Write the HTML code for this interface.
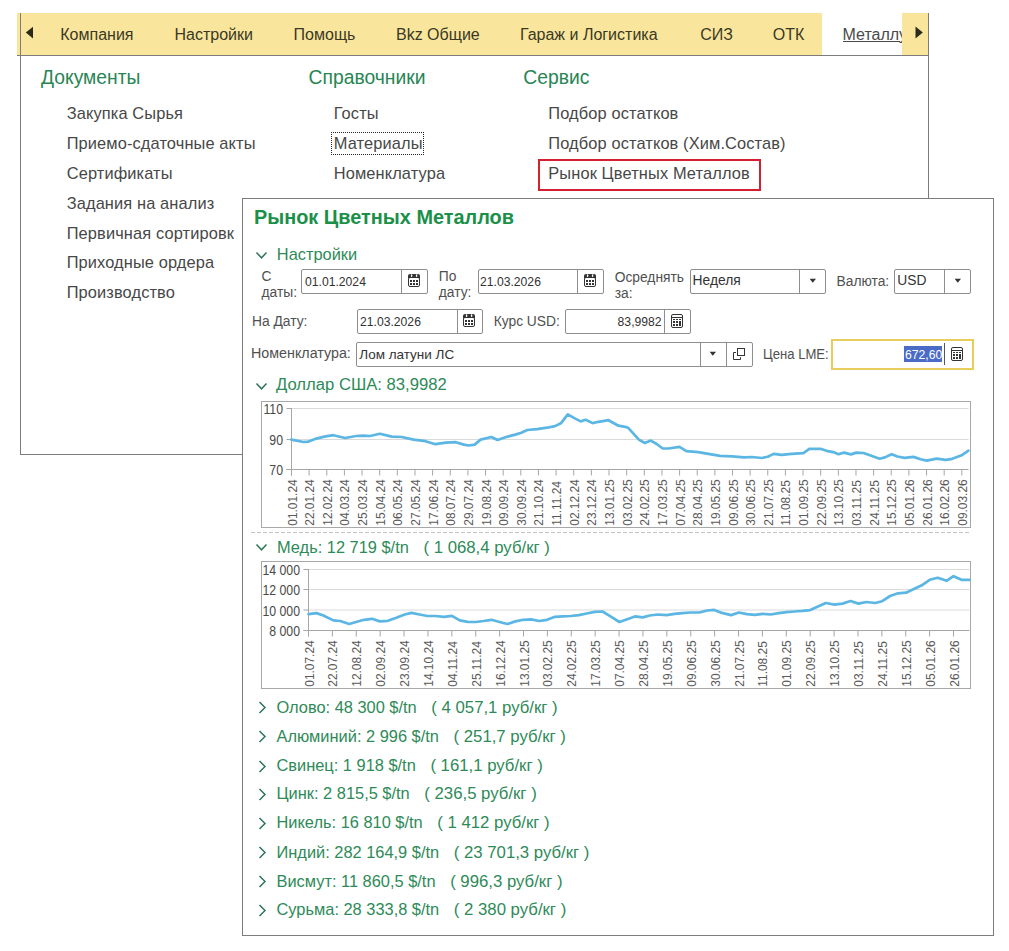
<!DOCTYPE html>
<html><head><meta charset="utf-8"><style>
html,body{margin:0;padding:0;background:#fff;}
body{width:1009px;height:951px;position:relative;overflow:hidden;font-family:"Liberation Sans", sans-serif;}
.t{position:absolute;white-space:nowrap;line-height:1;}
.t0{white-space:nowrap;line-height:1;}
.r{position:absolute;}
.lab{color:#5a5a5a;}
</style></head><body>
<div class="r" style="left:17.00px;top:13.00px;width:911.00px;height:42.00px;background:#f9e69c;"></div>
<div class="r" style="left:822.00px;top:13.00px;width:80.00px;height:42.00px;background:#ffffff;"></div>
<div class="r" style="left:17.00px;top:55.00px;width:912.00px;height:1.00px;background:#7c7c7c;"></div>
<div class="r" style="left:20.00px;top:13.00px;width:1.00px;height:442.00px;background:#7c7c7c;"></div>
<div class="r" style="left:928.00px;top:13.00px;width:1.00px;height:442.00px;background:#7c7c7c;"></div>
<div class="r" style="left:20.00px;top:454.00px;width:909.00px;height:1.00px;background:#7c7c7c;"></div>
<svg class="r" style="left:25px;top:26px" width="10" height="13"><path d="M0.8 6.6 L8 0.8 L8 12.6 Z" fill="#2a2a1a"/></svg>
<svg class="r" style="left:914px;top:26px" width="10" height="13"><path d="M1.5 0.6 L8.8 6.6 L1.5 12.6 Z" fill="#2a2a1a"/></svg>
<div class="t" style="left:60.30px;top:26.56px;font-size:16px;color:#3a3826;font-weight:normal;">Компания</div>
<div class="t" style="left:174.50px;top:26.56px;font-size:16px;color:#3a3826;font-weight:normal;">Настройки</div>
<div class="t" style="left:293.60px;top:26.56px;font-size:16px;color:#3a3826;font-weight:normal;">Помощь</div>
<div class="t" style="left:396.00px;top:26.56px;font-size:16px;color:#3a3826;font-weight:normal;">Bkz Общие</div>
<div class="t" style="left:519.90px;top:26.56px;font-size:16px;color:#3a3826;font-weight:normal;">Гараж и Логистика</div>
<div class="t" style="left:700.30px;top:26.56px;font-size:16px;color:#3a3826;font-weight:normal;">СИЗ</div>
<div class="t" style="left:772.70px;top:26.56px;font-size:16px;color:#3a3826;font-weight:normal;">ОТК</div>
<div class="r" style="left:842.5px;top:26.56px;width:59.5px;overflow:hidden;white-space:nowrap;line-height:1;font-size:16px;"><span class="t0" style="font-size:16px;color:#4a4a4a;text-decoration:underline;">Металлург</span></div>
<div class="t" style="left:41.00px;top:67.86px;font-size:19.3px;color:#288554;font-weight:normal;">Документы</div>
<div class="t" style="left:308.60px;top:68.06px;font-size:19.3px;color:#288554;font-weight:normal;">Справочники</div>
<div class="t" style="left:523.30px;top:68.06px;font-size:19.3px;color:#288554;font-weight:normal;">Сервис</div>
<div class="t" style="left:66.70px;top:105.42px;font-size:16.4px;color:#474747;font-weight:normal;letter-spacing:0.12px;">Закупка Сырья</div>
<div class="t" style="left:66.70px;top:135.12px;font-size:16.4px;color:#474747;font-weight:normal;letter-spacing:0.12px;">Приемо-сдаточные акты</div>
<div class="t" style="left:66.70px;top:164.72px;font-size:16.4px;color:#474747;font-weight:normal;letter-spacing:0.12px;">Сертификаты</div>
<div class="t" style="left:66.70px;top:194.72px;font-size:16.4px;color:#474747;font-weight:normal;letter-spacing:0.12px;">Задания на анализ</div>
<div class="t" style="left:66.70px;top:224.62px;font-size:16.4px;color:#474747;font-weight:normal;letter-spacing:0.12px;">Первичная сортировка</div>
<div class="t" style="left:66.70px;top:254.32px;font-size:16.4px;color:#474747;font-weight:normal;letter-spacing:0.12px;">Приходные ордера</div>
<div class="t" style="left:66.70px;top:283.92px;font-size:16.4px;color:#474747;font-weight:normal;letter-spacing:0.12px;">Производство</div>
<div class="t" style="left:333.70px;top:105.42px;font-size:16.4px;color:#474747;font-weight:normal;letter-spacing:0.12px;">Госты</div>
<div class="t" style="left:333.70px;top:135.12px;font-size:16.4px;color:#474747;font-weight:normal;letter-spacing:0.12px;">Материалы</div>
<div class="t" style="left:333.70px;top:164.72px;font-size:16.4px;color:#474747;font-weight:normal;letter-spacing:0.12px;">Номенклатура</div>
<div class="t" style="left:548.30px;top:105.42px;font-size:16.4px;color:#474747;font-weight:normal;letter-spacing:0.12px;">Подбор остатков</div>
<div class="t" style="left:548.30px;top:135.12px;font-size:16.4px;color:#474747;font-weight:normal;letter-spacing:0.12px;">Подбор остатков (Хим.Состав)</div>
<div class="t" style="left:548.30px;top:164.72px;font-size:16.4px;color:#474747;font-weight:normal;letter-spacing:0.12px;">Рынок Цветных Металлов</div>
<div class="r" style="left:331.00px;top:132.00px;width:92.50px;height:23.00px;box-sizing:border-box;border:1px dotted #222;"></div>
<div class="r" style="left:537.50px;top:158.50px;width:223.50px;height:32.00px;box-sizing:border-box;border:2.5px solid #d42030;"></div>
<div class="r" style="left:234.00px;top:198.00px;width:8.00px;height:256.00px;background:#fff;"></div>
<div class="r" style="left:241.50px;top:198.00px;width:752.00px;height:737.50px;background:#fff;box-sizing:border-box;border:1px solid #7c7c7c;"></div>
<div class="t" style="left:253.50px;top:207.36px;font-size:20.6px;color:#1a9048;font-weight:bold;transform:scaleX(0.965);transform-origin:0 50%;">Рынок Цветных Металлов</div>
<svg class="r" style="left:255px;top:250.5px" width="13" height="9"><path d="M1.5 1.5 L6.5 6.8 L11.5 1.5" fill="none" stroke="#2f7558" stroke-width="1.5"/></svg>
<div class="t" style="left:276.80px;top:245.92px;font-size:16.4px;color:#2e8a58;font-weight:normal;">Настройки</div>
<svg class="r" style="left:255px;top:381.5px" width="13" height="9"><path d="M1.5 1.5 L6.5 6.8 L11.5 1.5" fill="none" stroke="#2f7558" stroke-width="1.5"/></svg>
<div class="t" style="left:276.00px;top:376.61px;font-size:16.65px;color:#2e8a58;font-weight:normal;">Доллар США: 83,9982</div>
<div class="t" style="left:261.50px;top:269.92px;font-size:13.8px;color:#505050;font-weight:normal;">С</div>
<div class="t" style="left:261.50px;top:286.22px;font-size:13.8px;color:#505050;font-weight:normal;">даты:</div>
<div class="r" style="left:301.00px;top:269.00px;width:127.00px;height:25.00px;background:#fff;box-sizing:border-box;border:1px solid #8e8e8e;border-radius:2px;"></div>
<div class="r" style="left:401.30px;top:269.00px;width:1.00px;height:25.00px;background:#8e8e8e;"></div>
<div class="t" style="left:304.50px;top:274.94px;font-size:13.3px;color:#333;font-weight:normal;transform:scaleX(0.915);transform-origin:0 50%;">01.01.2024</div>
<svg class="r" style="left:408px;top:274px" width="12" height="13" shape-rendering="crispEdges"><path d="M0 2 Q0 0 2 0 L10 0 Q12 0 12 2 L12 4 L0 4 Z" fill="#333" shape-rendering="auto"/><rect x="0.5" y="3.5" width="11" height="9" rx="1.5" fill="none" stroke="#333" stroke-width="1" shape-rendering="auto"/><rect x="2.9" y="0.2" width="1.4" height="2.8" rx="0.7" fill="#fff" shape-rendering="auto"/><rect x="7.9" y="0.2" width="1.4" height="2.8" rx="0.7" fill="#fff" shape-rendering="auto"/><g fill="#333"><rect x="2" y="6" width="2" height="2"/><rect x="5" y="6" width="2" height="2"/><rect x="8" y="6" width="2" height="2"/><rect x="2" y="9" width="2" height="2"/><rect x="5" y="9" width="2" height="2"/><rect x="8" y="9" width="2" height="2"/></g></svg>
<div class="t" style="left:438.80px;top:269.72px;font-size:13.8px;color:#505050;font-weight:normal;">По</div>
<div class="t" style="left:438.80px;top:286.02px;font-size:13.8px;color:#505050;font-weight:normal;">дату:</div>
<div class="r" style="left:477.50px;top:269.00px;width:126.50px;height:25.00px;background:#fff;box-sizing:border-box;border:1px solid #8e8e8e;border-radius:2px;"></div>
<div class="r" style="left:577.40px;top:269.00px;width:1.00px;height:25.00px;background:#8e8e8e;"></div>
<div class="t" style="left:480.00px;top:274.94px;font-size:13.3px;color:#333;font-weight:normal;transform:scaleX(0.915);transform-origin:0 50%;">21.03.2026</div>
<svg class="r" style="left:584px;top:274px" width="12" height="13" shape-rendering="crispEdges"><path d="M0 2 Q0 0 2 0 L10 0 Q12 0 12 2 L12 4 L0 4 Z" fill="#333" shape-rendering="auto"/><rect x="0.5" y="3.5" width="11" height="9" rx="1.5" fill="none" stroke="#333" stroke-width="1" shape-rendering="auto"/><rect x="2.9" y="0.2" width="1.4" height="2.8" rx="0.7" fill="#fff" shape-rendering="auto"/><rect x="7.9" y="0.2" width="1.4" height="2.8" rx="0.7" fill="#fff" shape-rendering="auto"/><g fill="#333"><rect x="2" y="6" width="2" height="2"/><rect x="5" y="6" width="2" height="2"/><rect x="8" y="6" width="2" height="2"/><rect x="2" y="9" width="2" height="2"/><rect x="5" y="9" width="2" height="2"/><rect x="8" y="9" width="2" height="2"/></g></svg>
<div class="t" style="left:614.70px;top:270.92px;font-size:13.8px;color:#505050;font-weight:normal;">Осреднять</div>
<div class="t" style="left:614.70px;top:286.72px;font-size:13.8px;color:#505050;font-weight:normal;">за:</div>
<div class="r" style="left:689.60px;top:269.00px;width:136.40px;height:25.00px;background:#fff;box-sizing:border-box;border:1px solid #8e8e8e;border-radius:2px;"></div>
<div class="r" style="left:799.30px;top:269.00px;width:1.00px;height:25.00px;background:#8e8e8e;"></div>
<div class="t" style="left:692.60px;top:274.22px;font-size:13.8px;color:#333;font-weight:normal;">Неделя</div>
<svg class="r" style="left:808.5px;top:278.0px" width="8" height="6"><path d="M0.6 0.8 L7 0.8 L3.8 4.8 Z" fill="#333"/></svg>
<div class="t" style="left:836.50px;top:274.92px;font-size:13.8px;color:#505050;font-weight:normal;">Валюта:</div>
<div class="r" style="left:894.00px;top:269.00px;width:77.00px;height:25.00px;background:#fff;box-sizing:border-box;border:1px solid #8e8e8e;border-radius:2px;"></div>
<div class="r" style="left:944.30px;top:269.00px;width:1.00px;height:25.00px;background:#8e8e8e;"></div>
<div class="t" style="left:897.30px;top:274.22px;font-size:13.8px;color:#333;font-weight:normal;">USD</div>
<svg class="r" style="left:953.5px;top:278.0px" width="8" height="6"><path d="M0.6 0.8 L7 0.8 L3.8 4.8 Z" fill="#333"/></svg>
<div class="t" style="left:252.00px;top:315.12px;font-size:13.8px;color:#505050;font-weight:normal;">На Дату:</div>
<div class="r" style="left:356.60px;top:309.00px;width:126.40px;height:25.00px;background:#fff;box-sizing:border-box;border:1px solid #8e8e8e;border-radius:2px;"></div>
<div class="r" style="left:456.50px;top:309.00px;width:1.00px;height:25.00px;background:#8e8e8e;"></div>
<div class="t" style="left:360.00px;top:315.14px;font-size:13.3px;color:#333;font-weight:normal;transform:scaleX(0.915);transform-origin:0 50%;">21.03.2026</div>
<svg class="r" style="left:463px;top:314px" width="12" height="13" shape-rendering="crispEdges"><path d="M0 2 Q0 0 2 0 L10 0 Q12 0 12 2 L12 4 L0 4 Z" fill="#333" shape-rendering="auto"/><rect x="0.5" y="3.5" width="11" height="9" rx="1.5" fill="none" stroke="#333" stroke-width="1" shape-rendering="auto"/><rect x="2.9" y="0.2" width="1.4" height="2.8" rx="0.7" fill="#fff" shape-rendering="auto"/><rect x="7.9" y="0.2" width="1.4" height="2.8" rx="0.7" fill="#fff" shape-rendering="auto"/><g fill="#333"><rect x="2" y="6" width="2" height="2"/><rect x="5" y="6" width="2" height="2"/><rect x="8" y="6" width="2" height="2"/><rect x="2" y="9" width="2" height="2"/><rect x="5" y="9" width="2" height="2"/><rect x="8" y="9" width="2" height="2"/></g></svg>
<div class="t" style="left:493.70px;top:315.12px;font-size:13.8px;color:#505050;font-weight:normal;">Курс USD:</div>
<div class="r" style="left:564.70px;top:309.00px;width:126.30px;height:25.00px;background:#fff;box-sizing:border-box;border:1px solid #8e8e8e;border-radius:2px;"></div>
<div class="r" style="left:664.30px;top:309.00px;width:1.00px;height:25.00px;background:#8e8e8e;"></div>
<div class="t" style="left:580px;width:81.6px;text-align:right;top:315.14px;font-size:13.3px;color:#333;transform:scaleX(0.915);transform-origin:100% 50%;">83,9982</div>
<svg class="r" style="left:671px;top:314px" width="12" height="14" shape-rendering="crispEdges"><rect x="0.5" y="0.5" width="11" height="13" rx="1.5" fill="none" stroke="#333" stroke-width="1" shape-rendering="auto"/><g fill="#333"><rect x="1" y="3" width="10" height="1"/><rect x="2" y="5" width="2" height="1"/><rect x="5" y="5" width="2" height="1"/><rect x="8" y="5" width="2" height="1"/><rect x="2" y="7" width="2" height="2"/><rect x="5" y="7" width="2" height="2"/><rect x="8" y="7" width="2" height="5"/><rect x="2" y="10" width="2" height="2"/><rect x="5" y="10" width="2" height="2"/></g></svg>
<div class="t" style="left:251.40px;top:347.22px;font-size:13.8px;color:#505050;font-weight:normal;transform:scaleX(1.035);transform-origin:0 50%;">Номенклатура:</div>
<div class="r" style="left:356.40px;top:342.00px;width:396.60px;height:25.00px;background:#fff;box-sizing:border-box;border:1px solid #8e8e8e;border-radius:2px;"></div>
<div class="r" style="left:700.30px;top:342.00px;width:1.00px;height:25.00px;background:#8e8e8e;"></div>
<div class="r" style="left:726.40px;top:342.00px;width:1.00px;height:25.00px;background:#8e8e8e;"></div>
<div class="t" style="left:359.30px;top:347.57px;font-size:13.5px;color:#333;font-weight:normal;">Лом латуни ЛС</div>
<svg class="r" style="left:709px;top:350.5px" width="8" height="6"><path d="M0.6 0.8 L7 0.8 L3.8 4.8 Z" fill="#333"/></svg>
<svg class="r" style="left:732px;top:347px" width="14" height="14"><rect x="5.5" y="1.5" width="7" height="7" fill="none" stroke="#333" stroke-width="1"/><path d="M4 5.5 L1.5 5.5 L1.5 12.5 L8.5 12.5 L8.5 10.2" fill="none" stroke="#333" stroke-width="1"/></svg>
<div class="t" style="left:763.20px;top:347.62px;font-size:13.8px;color:#505050;font-weight:normal;transform:scaleX(0.95);transform-origin:0 50%;">Цена LME:</div>
<div class="r" style="left:831.00px;top:338.50px;width:143.00px;height:31.20px;background:#fff;box-sizing:border-box;border:2px solid #e8cd5c;"></div>
<div class="r" style="left:904.30px;top:346.20px;width:37.40px;height:15.40px;background:#4a6cc6;"></div>
<div class="t" style="left:905.00px;top:347.74px;font-size:13.3px;color:#fff;font-weight:normal;transform:scaleX(0.915);transform-origin:0 50%;">672,60</div>
<div class="r" style="left:944.00px;top:343.00px;width:1.00px;height:22.00px;background:#555;"></div>
<svg class="r" style="left:951px;top:347px" width="12" height="14" shape-rendering="crispEdges"><rect x="0.5" y="0.5" width="11" height="13" rx="1.5" fill="none" stroke="#333" stroke-width="1" shape-rendering="auto"/><g fill="#333"><rect x="1" y="3" width="10" height="1"/><rect x="2" y="5" width="2" height="1"/><rect x="5" y="5" width="2" height="1"/><rect x="8" y="5" width="2" height="1"/><rect x="2" y="7" width="2" height="2"/><rect x="5" y="7" width="2" height="2"/><rect x="8" y="7" width="2" height="5"/><rect x="2" y="10" width="2" height="2"/><rect x="5" y="10" width="2" height="2"/></g></svg>
<div class="r" style="left:261.00px;top:400.50px;width:710.00px;height:127.00px;box-sizing:border-box;border:1px solid #a8a8a8;"></div>
<svg class="r" style="left:0;top:0" width="1009" height="951"><line x1="291.5" y1="408.5" x2="968.5" y2="408.5" stroke="#dadada" stroke-width="1"/><line x1="291.5" y1="439.5" x2="968.5" y2="439.5" stroke="#dadada" stroke-width="1"/><line x1="291.5" y1="408.0" x2="291.5" y2="475.5" stroke="#a6a6a6" stroke-width="1"/><line x1="286.5" y1="469.5" x2="968.5" y2="469.5" stroke="#a6a6a6" stroke-width="1"/><line x1="286.5" y1="408.5" x2="291.5" y2="408.5" stroke="#a6a6a6" stroke-width="1"/><line x1="286.5" y1="439.5" x2="291.5" y2="439.5" stroke="#a6a6a6" stroke-width="1"/><line x1="286.5" y1="469.5" x2="291.5" y2="469.5" stroke="#a6a6a6" stroke-width="1"/><line x1="291.50" y1="469.5" x2="291.50" y2="475.5" stroke="#a6a6a6" stroke-width="1"/><line x1="309.14" y1="469.5" x2="309.14" y2="475.5" stroke="#a6a6a6" stroke-width="1"/><line x1="326.78" y1="469.5" x2="326.78" y2="475.5" stroke="#a6a6a6" stroke-width="1"/><line x1="344.42" y1="469.5" x2="344.42" y2="475.5" stroke="#a6a6a6" stroke-width="1"/><line x1="362.06" y1="469.5" x2="362.06" y2="475.5" stroke="#a6a6a6" stroke-width="1"/><line x1="379.70" y1="469.5" x2="379.70" y2="475.5" stroke="#a6a6a6" stroke-width="1"/><line x1="397.34" y1="469.5" x2="397.34" y2="475.5" stroke="#a6a6a6" stroke-width="1"/><line x1="414.98" y1="469.5" x2="414.98" y2="475.5" stroke="#a6a6a6" stroke-width="1"/><line x1="432.62" y1="469.5" x2="432.62" y2="475.5" stroke="#a6a6a6" stroke-width="1"/><line x1="450.26" y1="469.5" x2="450.26" y2="475.5" stroke="#a6a6a6" stroke-width="1"/><line x1="467.90" y1="469.5" x2="467.90" y2="475.5" stroke="#a6a6a6" stroke-width="1"/><line x1="485.54" y1="469.5" x2="485.54" y2="475.5" stroke="#a6a6a6" stroke-width="1"/><line x1="503.18" y1="469.5" x2="503.18" y2="475.5" stroke="#a6a6a6" stroke-width="1"/><line x1="520.82" y1="469.5" x2="520.82" y2="475.5" stroke="#a6a6a6" stroke-width="1"/><line x1="538.46" y1="469.5" x2="538.46" y2="475.5" stroke="#a6a6a6" stroke-width="1"/><line x1="556.10" y1="469.5" x2="556.10" y2="475.5" stroke="#a6a6a6" stroke-width="1"/><line x1="573.74" y1="469.5" x2="573.74" y2="475.5" stroke="#a6a6a6" stroke-width="1"/><line x1="591.38" y1="469.5" x2="591.38" y2="475.5" stroke="#a6a6a6" stroke-width="1"/><line x1="609.02" y1="469.5" x2="609.02" y2="475.5" stroke="#a6a6a6" stroke-width="1"/><line x1="626.66" y1="469.5" x2="626.66" y2="475.5" stroke="#a6a6a6" stroke-width="1"/><line x1="644.30" y1="469.5" x2="644.30" y2="475.5" stroke="#a6a6a6" stroke-width="1"/><line x1="661.94" y1="469.5" x2="661.94" y2="475.5" stroke="#a6a6a6" stroke-width="1"/><line x1="679.58" y1="469.5" x2="679.58" y2="475.5" stroke="#a6a6a6" stroke-width="1"/><line x1="697.22" y1="469.5" x2="697.22" y2="475.5" stroke="#a6a6a6" stroke-width="1"/><line x1="714.86" y1="469.5" x2="714.86" y2="475.5" stroke="#a6a6a6" stroke-width="1"/><line x1="732.50" y1="469.5" x2="732.50" y2="475.5" stroke="#a6a6a6" stroke-width="1"/><line x1="750.14" y1="469.5" x2="750.14" y2="475.5" stroke="#a6a6a6" stroke-width="1"/><line x1="767.78" y1="469.5" x2="767.78" y2="475.5" stroke="#a6a6a6" stroke-width="1"/><line x1="785.42" y1="469.5" x2="785.42" y2="475.5" stroke="#a6a6a6" stroke-width="1"/><line x1="803.06" y1="469.5" x2="803.06" y2="475.5" stroke="#a6a6a6" stroke-width="1"/><line x1="820.70" y1="469.5" x2="820.70" y2="475.5" stroke="#a6a6a6" stroke-width="1"/><line x1="838.34" y1="469.5" x2="838.34" y2="475.5" stroke="#a6a6a6" stroke-width="1"/><line x1="855.98" y1="469.5" x2="855.98" y2="475.5" stroke="#a6a6a6" stroke-width="1"/><line x1="873.62" y1="469.5" x2="873.62" y2="475.5" stroke="#a6a6a6" stroke-width="1"/><line x1="891.26" y1="469.5" x2="891.26" y2="475.5" stroke="#a6a6a6" stroke-width="1"/><line x1="908.90" y1="469.5" x2="908.90" y2="475.5" stroke="#a6a6a6" stroke-width="1"/><line x1="926.54" y1="469.5" x2="926.54" y2="475.5" stroke="#a6a6a6" stroke-width="1"/><line x1="944.18" y1="469.5" x2="944.18" y2="475.5" stroke="#a6a6a6" stroke-width="1"/><line x1="961.82" y1="469.5" x2="961.82" y2="475.5" stroke="#a6a6a6" stroke-width="1"/><polyline points="291.3,439.6 303.6,442.0 308.5,441.6 316.4,438.6 324.4,436.6 333.3,435.2 345.2,438.0 356.0,436.0 363.0,435.6 370.0,436.0 379.9,433.7 391.8,436.6 401.7,437.0 413.6,439.6 425.5,441.2 435.4,444.2 446.0,442.6 455.9,442.2 463.8,444.6 468.7,445.5 474.7,444.6 480.6,439.6 491.5,437.0 497.5,440.0 505.4,437.2 515.3,434.6 521.3,432.7 527.2,430.0 537.1,429.1 547.0,427.7 555.0,426.1 560.9,423.3 567.8,414.4 574.8,418.4 580.7,421.4 585.7,419.8 592.6,423.1 598.6,421.8 608.5,420.2 618.4,425.7 626.3,427.1 628.0,427.7 638.9,439.6 644.8,443.0 650.8,440.6 656.7,444.0 662.7,448.5 668.6,448.5 679.5,446.9 686.4,451.1 698.3,452.1 708.3,453.9 720.1,455.9 732.0,456.4 743.9,457.4 751.9,457.0 761.8,458.0 767.7,456.8 773.7,453.9 781.6,454.9 791.5,453.9 803.4,453.1 809.3,448.9 821.2,448.9 827.8,451.2 833.2,452.1 838.5,454.2 843.9,452.6 851.0,454.4 856.4,452.6 863.5,453.0 870.6,455.6 879.6,458.7 884.9,457.4 891.7,454.2 897.4,456.5 904.5,457.8 913.5,456.9 920.6,459.2 926.8,460.6 936.7,458.7 945.6,459.8 950.9,459.2 961.6,455.3 968.4,450.7" fill="none" stroke="#5bb6e4" stroke-width="2.7" stroke-linejoin="round" stroke-linecap="round"/></svg>
<div class="t" style="left:202.60000000000002px;width:80px;text-align:right;top:402.26px;font-size:14.2px;color:#4a4a4a;transform:scaleX(0.865);transform-origin:100% 50%">110</div>
<div class="t" style="left:202.60000000000002px;width:80px;text-align:right;top:433.26px;font-size:14.2px;color:#4a4a4a;transform:scaleX(0.865);transform-origin:100% 50%">90</div>
<div class="t" style="left:202.60000000000002px;width:80px;text-align:right;top:463.26px;font-size:14.2px;color:#4a4a4a;transform:scaleX(0.865);transform-origin:100% 50%">70</div>
<div class="t lab" style="left:292.50px;top:519.20px;font-size:13.4px;transform-origin:0 50%;transform:rotate(-90deg) scaleX(0.89);">01.01.24</div>
<div class="t lab" style="left:310.14px;top:519.20px;font-size:13.4px;transform-origin:0 50%;transform:rotate(-90deg) scaleX(0.89);">22.01.24</div>
<div class="t lab" style="left:327.78px;top:519.20px;font-size:13.4px;transform-origin:0 50%;transform:rotate(-90deg) scaleX(0.89);">12.02.24</div>
<div class="t lab" style="left:345.42px;top:519.20px;font-size:13.4px;transform-origin:0 50%;transform:rotate(-90deg) scaleX(0.89);">04.03.24</div>
<div class="t lab" style="left:363.06px;top:519.20px;font-size:13.4px;transform-origin:0 50%;transform:rotate(-90deg) scaleX(0.89);">25.03.24</div>
<div class="t lab" style="left:380.70px;top:519.20px;font-size:13.4px;transform-origin:0 50%;transform:rotate(-90deg) scaleX(0.89);">15.04.24</div>
<div class="t lab" style="left:398.34px;top:519.20px;font-size:13.4px;transform-origin:0 50%;transform:rotate(-90deg) scaleX(0.89);">06.05.24</div>
<div class="t lab" style="left:415.98px;top:519.20px;font-size:13.4px;transform-origin:0 50%;transform:rotate(-90deg) scaleX(0.89);">27.05.24</div>
<div class="t lab" style="left:433.62px;top:519.20px;font-size:13.4px;transform-origin:0 50%;transform:rotate(-90deg) scaleX(0.89);">17.06.24</div>
<div class="t lab" style="left:451.26px;top:519.20px;font-size:13.4px;transform-origin:0 50%;transform:rotate(-90deg) scaleX(0.89);">08.07.24</div>
<div class="t lab" style="left:468.90px;top:519.20px;font-size:13.4px;transform-origin:0 50%;transform:rotate(-90deg) scaleX(0.89);">29.07.24</div>
<div class="t lab" style="left:486.54px;top:519.20px;font-size:13.4px;transform-origin:0 50%;transform:rotate(-90deg) scaleX(0.89);">19.08.24</div>
<div class="t lab" style="left:504.18px;top:519.20px;font-size:13.4px;transform-origin:0 50%;transform:rotate(-90deg) scaleX(0.89);">09.09.24</div>
<div class="t lab" style="left:521.82px;top:519.20px;font-size:13.4px;transform-origin:0 50%;transform:rotate(-90deg) scaleX(0.89);">30.09.24</div>
<div class="t lab" style="left:539.46px;top:519.20px;font-size:13.4px;transform-origin:0 50%;transform:rotate(-90deg) scaleX(0.89);">21.10.24</div>
<div class="t lab" style="left:557.10px;top:519.20px;font-size:13.4px;transform-origin:0 50%;transform:rotate(-90deg) scaleX(0.89);">11.11.24</div>
<div class="t lab" style="left:574.74px;top:519.20px;font-size:13.4px;transform-origin:0 50%;transform:rotate(-90deg) scaleX(0.89);">02.12.24</div>
<div class="t lab" style="left:592.38px;top:519.20px;font-size:13.4px;transform-origin:0 50%;transform:rotate(-90deg) scaleX(0.89);">23.12.24</div>
<div class="t lab" style="left:610.02px;top:519.20px;font-size:13.4px;transform-origin:0 50%;transform:rotate(-90deg) scaleX(0.89);">13.01.25</div>
<div class="t lab" style="left:627.66px;top:519.20px;font-size:13.4px;transform-origin:0 50%;transform:rotate(-90deg) scaleX(0.89);">03.02.25</div>
<div class="t lab" style="left:645.30px;top:519.20px;font-size:13.4px;transform-origin:0 50%;transform:rotate(-90deg) scaleX(0.89);">24.02.25</div>
<div class="t lab" style="left:662.94px;top:519.20px;font-size:13.4px;transform-origin:0 50%;transform:rotate(-90deg) scaleX(0.89);">17.03.25</div>
<div class="t lab" style="left:680.58px;top:519.20px;font-size:13.4px;transform-origin:0 50%;transform:rotate(-90deg) scaleX(0.89);">07.04.25</div>
<div class="t lab" style="left:698.22px;top:519.20px;font-size:13.4px;transform-origin:0 50%;transform:rotate(-90deg) scaleX(0.89);">28.04.25</div>
<div class="t lab" style="left:715.86px;top:519.20px;font-size:13.4px;transform-origin:0 50%;transform:rotate(-90deg) scaleX(0.89);">19.05.25</div>
<div class="t lab" style="left:733.50px;top:519.20px;font-size:13.4px;transform-origin:0 50%;transform:rotate(-90deg) scaleX(0.89);">09.06.25</div>
<div class="t lab" style="left:751.14px;top:519.20px;font-size:13.4px;transform-origin:0 50%;transform:rotate(-90deg) scaleX(0.89);">30.06.25</div>
<div class="t lab" style="left:768.78px;top:519.20px;font-size:13.4px;transform-origin:0 50%;transform:rotate(-90deg) scaleX(0.89);">21.07.25</div>
<div class="t lab" style="left:786.42px;top:519.20px;font-size:13.4px;transform-origin:0 50%;transform:rotate(-90deg) scaleX(0.89);">11.08.25</div>
<div class="t lab" style="left:804.06px;top:519.20px;font-size:13.4px;transform-origin:0 50%;transform:rotate(-90deg) scaleX(0.89);">01.09.25</div>
<div class="t lab" style="left:821.70px;top:519.20px;font-size:13.4px;transform-origin:0 50%;transform:rotate(-90deg) scaleX(0.89);">22.09.25</div>
<div class="t lab" style="left:839.34px;top:519.20px;font-size:13.4px;transform-origin:0 50%;transform:rotate(-90deg) scaleX(0.89);">13.10.25</div>
<div class="t lab" style="left:856.98px;top:519.20px;font-size:13.4px;transform-origin:0 50%;transform:rotate(-90deg) scaleX(0.89);">03.11.25</div>
<div class="t lab" style="left:874.62px;top:519.20px;font-size:13.4px;transform-origin:0 50%;transform:rotate(-90deg) scaleX(0.89);">24.11.25</div>
<div class="t lab" style="left:892.26px;top:519.20px;font-size:13.4px;transform-origin:0 50%;transform:rotate(-90deg) scaleX(0.89);">15.12.25</div>
<div class="t lab" style="left:909.90px;top:519.20px;font-size:13.4px;transform-origin:0 50%;transform:rotate(-90deg) scaleX(0.89);">05.01.26</div>
<div class="t lab" style="left:927.54px;top:519.20px;font-size:13.4px;transform-origin:0 50%;transform:rotate(-90deg) scaleX(0.89);">26.01.26</div>
<div class="t lab" style="left:945.18px;top:519.20px;font-size:13.4px;transform-origin:0 50%;transform:rotate(-90deg) scaleX(0.89);">16.02.26</div>
<div class="t lab" style="left:962.82px;top:519.20px;font-size:13.4px;transform-origin:0 50%;transform:rotate(-90deg) scaleX(0.89);">09.03.26</div>
<svg class="r" style="left:0;top:0" width="1009" height="951"><line x1="251" y1="532.5" x2="970" y2="532.5" stroke="#c4c4c4" stroke-width="1" stroke-dasharray="4 2"/></svg>
<svg class="r" style="left:255px;top:542.5px" width="13" height="9"><path d="M1.5 1.5 L6.5 6.8 L11.5 1.5" fill="none" stroke="#2f7558" stroke-width="1.5"/></svg>
<div class="t" style="left:277.00px;top:538.82px;font-size:16.4px;color:#2e8a58;font-weight:normal;">Медь: 12 719 $/tn<span style="margin-left:14.6px;font-size:16.75px">( 1 068,4 руб/кг )</span></div>
<div class="r" style="left:261.00px;top:561.30px;width:710.00px;height:127.40px;box-sizing:border-box;border:1px solid #a8a8a8;"></div>
<svg class="r" style="left:0;top:0" width="1009" height="951"><line x1="308.5" y1="569.5" x2="969.5" y2="569.5" stroke="#dadada" stroke-width="1"/><line x1="308.5" y1="589.5" x2="969.5" y2="589.5" stroke="#dadada" stroke-width="1"/><line x1="308.5" y1="610" x2="969.5" y2="610" stroke="#dadada" stroke-width="1"/><line x1="308.5" y1="569.0" x2="308.5" y2="636.5" stroke="#a6a6a6" stroke-width="1"/><line x1="303.5" y1="630.5" x2="969.5" y2="630.5" stroke="#a6a6a6" stroke-width="1"/><line x1="303.5" y1="569.5" x2="308.5" y2="569.5" stroke="#a6a6a6" stroke-width="1"/><line x1="303.5" y1="589.5" x2="308.5" y2="589.5" stroke="#a6a6a6" stroke-width="1"/><line x1="303.5" y1="610" x2="308.5" y2="610" stroke="#a6a6a6" stroke-width="1"/><line x1="303.5" y1="630.5" x2="308.5" y2="630.5" stroke="#a6a6a6" stroke-width="1"/><line x1="308.50" y1="630.5" x2="308.50" y2="636.5" stroke="#a6a6a6" stroke-width="1"/><line x1="332.39" y1="630.5" x2="332.39" y2="636.5" stroke="#a6a6a6" stroke-width="1"/><line x1="356.28" y1="630.5" x2="356.28" y2="636.5" stroke="#a6a6a6" stroke-width="1"/><line x1="380.17" y1="630.5" x2="380.17" y2="636.5" stroke="#a6a6a6" stroke-width="1"/><line x1="404.06" y1="630.5" x2="404.06" y2="636.5" stroke="#a6a6a6" stroke-width="1"/><line x1="427.95" y1="630.5" x2="427.95" y2="636.5" stroke="#a6a6a6" stroke-width="1"/><line x1="451.84" y1="630.5" x2="451.84" y2="636.5" stroke="#a6a6a6" stroke-width="1"/><line x1="475.73" y1="630.5" x2="475.73" y2="636.5" stroke="#a6a6a6" stroke-width="1"/><line x1="499.62" y1="630.5" x2="499.62" y2="636.5" stroke="#a6a6a6" stroke-width="1"/><line x1="523.51" y1="630.5" x2="523.51" y2="636.5" stroke="#a6a6a6" stroke-width="1"/><line x1="547.40" y1="630.5" x2="547.40" y2="636.5" stroke="#a6a6a6" stroke-width="1"/><line x1="571.29" y1="630.5" x2="571.29" y2="636.5" stroke="#a6a6a6" stroke-width="1"/><line x1="595.18" y1="630.5" x2="595.18" y2="636.5" stroke="#a6a6a6" stroke-width="1"/><line x1="619.07" y1="630.5" x2="619.07" y2="636.5" stroke="#a6a6a6" stroke-width="1"/><line x1="642.96" y1="630.5" x2="642.96" y2="636.5" stroke="#a6a6a6" stroke-width="1"/><line x1="666.85" y1="630.5" x2="666.85" y2="636.5" stroke="#a6a6a6" stroke-width="1"/><line x1="690.74" y1="630.5" x2="690.74" y2="636.5" stroke="#a6a6a6" stroke-width="1"/><line x1="714.63" y1="630.5" x2="714.63" y2="636.5" stroke="#a6a6a6" stroke-width="1"/><line x1="738.52" y1="630.5" x2="738.52" y2="636.5" stroke="#a6a6a6" stroke-width="1"/><line x1="762.41" y1="630.5" x2="762.41" y2="636.5" stroke="#a6a6a6" stroke-width="1"/><line x1="786.30" y1="630.5" x2="786.30" y2="636.5" stroke="#a6a6a6" stroke-width="1"/><line x1="810.19" y1="630.5" x2="810.19" y2="636.5" stroke="#a6a6a6" stroke-width="1"/><line x1="834.08" y1="630.5" x2="834.08" y2="636.5" stroke="#a6a6a6" stroke-width="1"/><line x1="857.97" y1="630.5" x2="857.97" y2="636.5" stroke="#a6a6a6" stroke-width="1"/><line x1="881.86" y1="630.5" x2="881.86" y2="636.5" stroke="#a6a6a6" stroke-width="1"/><line x1="905.75" y1="630.5" x2="905.75" y2="636.5" stroke="#a6a6a6" stroke-width="1"/><line x1="929.64" y1="630.5" x2="929.64" y2="636.5" stroke="#a6a6a6" stroke-width="1"/><line x1="953.53" y1="630.5" x2="953.53" y2="636.5" stroke="#a6a6a6" stroke-width="1"/><polyline points="308.5,614.1 316.4,613.1 323.4,615.5 333.3,620.4 340.2,621.0 349.2,624.0 356.1,622.0 364.0,619.8 372.0,618.8 379.9,621.4 387.8,620.8 395.7,618.0 404.7,614.5 411.6,612.9 419.5,614.5 427.5,616.0 435.4,616.0 444.0,616.8 451.9,615.9 459.8,620.4 467.8,621.8 475.7,622.0 483.6,621.0 491.5,619.8 499.5,622.0 507.4,624.0 515.3,621.4 523.2,619.8 531.2,619.4 539.1,621.0 547.0,619.8 555.0,616.8 562.9,616.4 570.8,616.0 578.8,615.1 586.7,613.5 594.6,611.9 602.5,611.5 610.5,616.4 619.4,622.0 627.9,619.0 634.9,616.4 642.8,617.4 649.7,615.5 657.7,614.5 666.6,615.1 674.5,613.9 682.4,613.1 690.4,612.5 699.3,612.5 707.2,610.5 714.2,609.9 722.1,612.9 731.0,615.1 738.9,612.5 746.9,614.1 754.8,614.9 762.7,613.9 770.6,614.5 778.6,613.1 786.5,612.1 794.4,611.5 802.4,610.9 810.3,610.1 825.7,603.0 834.6,604.6 842.5,603.6 850.5,601.0 858.4,603.6 866.3,602.0 875.2,603.0 882.2,601.2 890.1,596.0 898.0,593.3 906.0,592.7 913.9,589.1 921.8,585.3 929.7,579.8 937.7,577.8 946.6,580.8 953.5,576.2 961.5,579.8 969.4,579.8" fill="none" stroke="#5bb6e4" stroke-width="2.7" stroke-linejoin="round" stroke-linecap="round"/></svg>
<div class="t" style="left:219.7px;width:80px;text-align:right;top:563.26px;font-size:14.2px;color:#4a4a4a;transform:scaleX(0.865);transform-origin:100% 50%">14 000</div>
<div class="t" style="left:219.7px;width:80px;text-align:right;top:583.26px;font-size:14.2px;color:#4a4a4a;transform:scaleX(0.865);transform-origin:100% 50%">12 000</div>
<div class="t" style="left:219.7px;width:80px;text-align:right;top:603.76px;font-size:14.2px;color:#4a4a4a;transform:scaleX(0.865);transform-origin:100% 50%">10 000</div>
<div class="t" style="left:219.7px;width:80px;text-align:right;top:624.26px;font-size:14.2px;color:#4a4a4a;transform:scaleX(0.865);transform-origin:100% 50%">8 000</div>
<div class="t lab" style="left:309.50px;top:680.40px;font-size:13.4px;transform-origin:0 50%;transform:rotate(-90deg) scaleX(0.89);">01.07.24</div>
<div class="t lab" style="left:333.39px;top:680.40px;font-size:13.4px;transform-origin:0 50%;transform:rotate(-90deg) scaleX(0.89);">22.07.24</div>
<div class="t lab" style="left:357.28px;top:680.40px;font-size:13.4px;transform-origin:0 50%;transform:rotate(-90deg) scaleX(0.89);">12.08.24</div>
<div class="t lab" style="left:381.17px;top:680.40px;font-size:13.4px;transform-origin:0 50%;transform:rotate(-90deg) scaleX(0.89);">02.09.24</div>
<div class="t lab" style="left:405.06px;top:680.40px;font-size:13.4px;transform-origin:0 50%;transform:rotate(-90deg) scaleX(0.89);">23.09.24</div>
<div class="t lab" style="left:428.95px;top:680.40px;font-size:13.4px;transform-origin:0 50%;transform:rotate(-90deg) scaleX(0.89);">14.10.24</div>
<div class="t lab" style="left:452.84px;top:680.40px;font-size:13.4px;transform-origin:0 50%;transform:rotate(-90deg) scaleX(0.89);">04.11.24</div>
<div class="t lab" style="left:476.73px;top:680.40px;font-size:13.4px;transform-origin:0 50%;transform:rotate(-90deg) scaleX(0.89);">25.11.24</div>
<div class="t lab" style="left:500.62px;top:680.40px;font-size:13.4px;transform-origin:0 50%;transform:rotate(-90deg) scaleX(0.89);">16.12.24</div>
<div class="t lab" style="left:524.51px;top:680.40px;font-size:13.4px;transform-origin:0 50%;transform:rotate(-90deg) scaleX(0.89);">13.01.25</div>
<div class="t lab" style="left:548.40px;top:680.40px;font-size:13.4px;transform-origin:0 50%;transform:rotate(-90deg) scaleX(0.89);">03.02.25</div>
<div class="t lab" style="left:572.29px;top:680.40px;font-size:13.4px;transform-origin:0 50%;transform:rotate(-90deg) scaleX(0.89);">24.02.25</div>
<div class="t lab" style="left:596.18px;top:680.40px;font-size:13.4px;transform-origin:0 50%;transform:rotate(-90deg) scaleX(0.89);">17.03.25</div>
<div class="t lab" style="left:620.07px;top:680.40px;font-size:13.4px;transform-origin:0 50%;transform:rotate(-90deg) scaleX(0.89);">07.04.25</div>
<div class="t lab" style="left:643.96px;top:680.40px;font-size:13.4px;transform-origin:0 50%;transform:rotate(-90deg) scaleX(0.89);">28.04.25</div>
<div class="t lab" style="left:667.85px;top:680.40px;font-size:13.4px;transform-origin:0 50%;transform:rotate(-90deg) scaleX(0.89);">19.05.25</div>
<div class="t lab" style="left:691.74px;top:680.40px;font-size:13.4px;transform-origin:0 50%;transform:rotate(-90deg) scaleX(0.89);">09.06.25</div>
<div class="t lab" style="left:715.63px;top:680.40px;font-size:13.4px;transform-origin:0 50%;transform:rotate(-90deg) scaleX(0.89);">30.06.25</div>
<div class="t lab" style="left:739.52px;top:680.40px;font-size:13.4px;transform-origin:0 50%;transform:rotate(-90deg) scaleX(0.89);">21.07.25</div>
<div class="t lab" style="left:763.41px;top:680.40px;font-size:13.4px;transform-origin:0 50%;transform:rotate(-90deg) scaleX(0.89);">11.08.25</div>
<div class="t lab" style="left:787.30px;top:680.40px;font-size:13.4px;transform-origin:0 50%;transform:rotate(-90deg) scaleX(0.89);">01.09.25</div>
<div class="t lab" style="left:811.19px;top:680.40px;font-size:13.4px;transform-origin:0 50%;transform:rotate(-90deg) scaleX(0.89);">22.09.25</div>
<div class="t lab" style="left:835.08px;top:680.40px;font-size:13.4px;transform-origin:0 50%;transform:rotate(-90deg) scaleX(0.89);">13.10.25</div>
<div class="t lab" style="left:858.97px;top:680.40px;font-size:13.4px;transform-origin:0 50%;transform:rotate(-90deg) scaleX(0.89);">03.11.25</div>
<div class="t lab" style="left:882.86px;top:680.40px;font-size:13.4px;transform-origin:0 50%;transform:rotate(-90deg) scaleX(0.89);">24.11.25</div>
<div class="t lab" style="left:906.75px;top:680.40px;font-size:13.4px;transform-origin:0 50%;transform:rotate(-90deg) scaleX(0.89);">15.12.25</div>
<div class="t lab" style="left:930.64px;top:680.40px;font-size:13.4px;transform-origin:0 50%;transform:rotate(-90deg) scaleX(0.89);">05.01.26</div>
<div class="t lab" style="left:954.53px;top:680.40px;font-size:13.4px;transform-origin:0 50%;transform:rotate(-90deg) scaleX(0.89);">26.01.26</div>
<svg class="r" style="left:257.5px;top:701.3000000000001px" width="9" height="13"><path d="M1.5 1 L7 6.5 L1.5 12" fill="none" stroke="#2f7558" stroke-width="1.5"/></svg>
<div class="t" style="left:276.50px;top:698.72px;font-size:16.4px;color:#2e8a58;font-weight:normal;">Олово: 48 300 $/tn<span style="margin-left:14.6px;font-size:16.75px">( 4 057,1 руб/кг )</span></div>
<svg class="r" style="left:257.5px;top:730.3000000000001px" width="9" height="13"><path d="M1.5 1 L7 6.5 L1.5 12" fill="none" stroke="#2f7558" stroke-width="1.5"/></svg>
<div class="t" style="left:276.50px;top:727.72px;font-size:16.4px;color:#2e8a58;font-weight:normal;">Алюминий: 2 996 $/tn<span style="margin-left:14.6px;font-size:16.75px">( 251,7 руб/кг )</span></div>
<svg class="r" style="left:257.5px;top:759.7px" width="9" height="13"><path d="M1.5 1 L7 6.5 L1.5 12" fill="none" stroke="#2f7558" stroke-width="1.5"/></svg>
<div class="t" style="left:276.50px;top:757.12px;font-size:16.4px;color:#2e8a58;font-weight:normal;">Свинец: 1 918 $/tn<span style="margin-left:14.6px;font-size:16.75px">( 161,1 руб/кг )</span></div>
<svg class="r" style="left:257.5px;top:787.9000000000001px" width="9" height="13"><path d="M1.5 1 L7 6.5 L1.5 12" fill="none" stroke="#2f7558" stroke-width="1.5"/></svg>
<div class="t" style="left:276.50px;top:785.32px;font-size:16.4px;color:#2e8a58;font-weight:normal;">Цинк: 2 815,5 $/tn<span style="margin-left:14.6px;font-size:16.75px">( 236,5 руб/кг )</span></div>
<svg class="r" style="left:257.5px;top:816.9000000000001px" width="9" height="13"><path d="M1.5 1 L7 6.5 L1.5 12" fill="none" stroke="#2f7558" stroke-width="1.5"/></svg>
<div class="t" style="left:276.50px;top:814.32px;font-size:16.4px;color:#2e8a58;font-weight:normal;">Никель: 16 810 $/tn<span style="margin-left:14.6px;font-size:16.75px">( 1 412 руб/кг )</span></div>
<svg class="r" style="left:257.5px;top:846.3000000000001px" width="9" height="13"><path d="M1.5 1 L7 6.5 L1.5 12" fill="none" stroke="#2f7558" stroke-width="1.5"/></svg>
<div class="t" style="left:276.50px;top:843.72px;font-size:16.4px;color:#2e8a58;font-weight:normal;">Индий: 282 164,9 $/tn<span style="margin-left:14.6px;font-size:16.75px">( 23 701,3 руб/кг )</span></div>
<svg class="r" style="left:257.5px;top:875.3000000000001px" width="9" height="13"><path d="M1.5 1 L7 6.5 L1.5 12" fill="none" stroke="#2f7558" stroke-width="1.5"/></svg>
<div class="t" style="left:276.50px;top:872.72px;font-size:16.4px;color:#2e8a58;font-weight:normal;">Висмут: 11 860,5 $/tn<span style="margin-left:14.6px;font-size:16.75px">( 996,3 руб/кг )</span></div>
<svg class="r" style="left:257.5px;top:903.9000000000001px" width="9" height="13"><path d="M1.5 1 L7 6.5 L1.5 12" fill="none" stroke="#2f7558" stroke-width="1.5"/></svg>
<div class="t" style="left:276.50px;top:901.32px;font-size:16.4px;color:#2e8a58;font-weight:normal;">Сурьма: 28 333,8 $/tn<span style="margin-left:14.6px;font-size:16.75px">( 2 380 руб/кг )</span></div>
</body></html>
